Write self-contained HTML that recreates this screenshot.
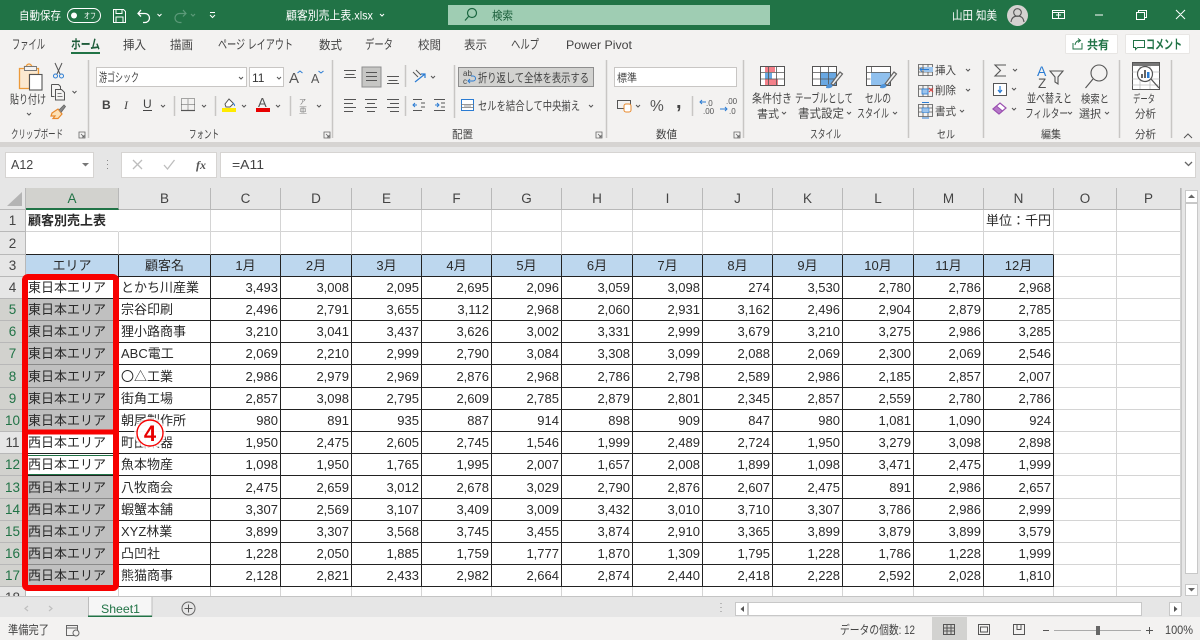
<!DOCTYPE html>
<html lang="ja"><head><meta charset="utf-8"><title>顧客別売上表</title>
<style>
html,body{margin:0;padding:0;width:1200px;height:640px;overflow:hidden;background:#e6e6e6}
body{position:relative;font-family:"Liberation Sans","Noto Sans CJK JP",sans-serif}
svg{position:absolute;left:0;top:0;font-family:"Liberation Sans","Noto Sans CJK JP",sans-serif}
svg text{fill:#444;font-size:12px}
.w text{fill:#fff}
.grid{position:absolute;left:0;top:188px;width:1181px;height:408px;overflow:hidden;background:#fff}
table{border-collapse:separate;border-spacing:0;table-layout:fixed;width:1181px;font-size:13px;color:#2a2a2a}
td,th{box-sizing:border-box;padding:0 2px 0 1px;border-right:1px solid #d4d4d4;border-bottom:1px solid #d4d4d4;text-align:right;line-height:17px;white-space:nowrap;overflow:hidden;font-weight:normal}
th{text-align:center;background:#e6e6e6;color:#444;font-size:13.5px;border-color:#b8b8b8;padding:0}
th.a{background:#d2d2ce;color:#217346;border-bottom:2px solid #217346}
th.s{background:#d2d2ce;color:#217346}
td.l{text-align:left;padding-left:2px}
td.c{text-align:center;padding:0}
tr.d td{border-color:#222}
tr.d td.g{border-color:#d4d4d4}
tr.b td{border-bottom-color:#222}
tr.b td.g{border-bottom-color:#d4d4d4}
tr.h td{background:#bdd7ee}
tr.h td.g{background:#fff}
td.x{background:#c0c0c0;border-bottom-color:#8a8a8a!important}
</style></head><body>
<div class="grid"><table>
<colgroup><col style="width:26px"><col style="width:93px"><col style="width:92px"><col style="width:70px"><col style="width:71px"><col style="width:70px"><col style="width:70px"><col style="width:70px"><col style="width:71px"><col style="width:70px"><col style="width:70px"><col style="width:70px"><col style="width:71px"><col style="width:70px"><col style="width:70px"><col style="width:63px"><col style="width:64px"></colgroup>
<tr style="height:22px"><th></th><th class="a">A</th><th>B</th><th>C</th><th>D</th><th>E</th><th>F</th><th>G</th><th>H</th><th>I</th><th>J</th><th>K</th><th>L</th><th>M</th><th>N</th><th>O</th><th>P</th></tr>
<tr style="height:22px"><th>1</th><td class="l" style="font-weight:bold;overflow:visible;border-right-color:transparent">顧客別売上表</td><td></td><td></td><td></td><td></td><td></td><td></td><td></td><td></td><td></td><td></td><td></td><td></td><td class="l" style="padding-left:2px">単位：千円</td><td></td><td></td></tr>
<tr class="b" style="height:23px"><th>2</th><td></td><td></td><td></td><td></td><td></td><td></td><td></td><td></td><td></td><td></td><td></td><td></td><td></td><td></td><td class="g"></td><td class="g"></td></tr>
<tr class="d h" style="height:22px"><th>3</th><td class="c">エリア</td><td class="c">顧客名</td><td class="c">1月</td><td class="c">2月</td><td class="c">3月</td><td class="c">4月</td><td class="c">5月</td><td class="c">6月</td><td class="c">7月</td><td class="c">8月</td><td class="c">9月</td><td class="c">10月</td><td class="c">11月</td><td class="c">12月</td><td class="g"></td><td class="g"></td></tr>
<tr class="d" style="height:22px"><th>4</th><td class="l">東日本エリア</td><td class="l">とかち川産業</td><td>3,493</td><td>3,008</td><td>2,095</td><td>2,695</td><td>2,096</td><td>3,059</td><td>3,098</td><td>274</td><td>3,530</td><td>2,780</td><td>2,786</td><td>2,968</td><td class="g"></td><td class="g"></td></tr>
<tr class="d" style="height:22px"><th class="s">5</th><td class="l x">東日本エリア</td><td class="l">宗谷印刷</td><td>2,496</td><td>2,791</td><td>3,655</td><td>3,112</td><td>2,968</td><td>2,060</td><td>2,931</td><td>3,162</td><td>2,496</td><td>2,904</td><td>2,879</td><td>2,785</td><td class="g"></td><td class="g"></td></tr>
<tr class="d" style="height:22px"><th class="s">6</th><td class="l x">東日本エリア</td><td class="l">狸小路商事</td><td>3,210</td><td>3,041</td><td>3,437</td><td>3,626</td><td>3,002</td><td>3,331</td><td>2,999</td><td>3,679</td><td>3,210</td><td>3,275</td><td>2,986</td><td>3,285</td><td class="g"></td><td class="g"></td></tr>
<tr class="d" style="height:22px"><th class="s">7</th><td class="l x">東日本エリア</td><td class="l">ABC電工</td><td>2,069</td><td>2,210</td><td>2,999</td><td>2,790</td><td>3,084</td><td>3,308</td><td>3,099</td><td>2,088</td><td>2,069</td><td>2,300</td><td>2,069</td><td>2,546</td><td class="g"></td><td class="g"></td></tr>
<tr class="d" style="height:23px"><th class="s">8</th><td class="l x">東日本エリア</td><td class="l">〇△工業</td><td>2,986</td><td>2,979</td><td>2,969</td><td>2,876</td><td>2,968</td><td>2,786</td><td>2,798</td><td>2,589</td><td>2,986</td><td>2,185</td><td>2,857</td><td>2,007</td><td class="g"></td><td class="g"></td></tr>
<tr class="d" style="height:22px"><th class="s">9</th><td class="l x">東日本エリア</td><td class="l">街角工場</td><td>2,857</td><td>3,098</td><td>2,795</td><td>2,609</td><td>2,785</td><td>2,879</td><td>2,801</td><td>2,345</td><td>2,857</td><td>2,559</td><td>2,780</td><td>2,786</td><td class="g"></td><td class="g"></td></tr>
<tr class="d" style="height:22px"><th class="s">10</th><td class="l x">東日本エリア</td><td class="l">朝尾製作所</td><td>980</td><td>891</td><td>935</td><td>887</td><td>914</td><td>898</td><td>909</td><td>847</td><td>980</td><td>1,081</td><td>1,090</td><td>924</td><td class="g"></td><td class="g"></td></tr>
<tr class="d" style="height:22px"><th>11</th><td class="l">西日本エリア</td><td class="l">町田楽器</td><td>1,950</td><td>2,475</td><td>2,605</td><td>2,745</td><td>1,546</td><td>1,999</td><td>2,489</td><td>2,724</td><td>1,950</td><td>3,279</td><td>3,098</td><td>2,898</td><td class="g"></td><td class="g"></td></tr>
<tr class="d" style="height:22px"><th class="s">12</th><td class="l">西日本エリア</td><td class="l">魚本物産</td><td>1,098</td><td>1,950</td><td>1,765</td><td>1,995</td><td>2,007</td><td>1,657</td><td>2,008</td><td>1,899</td><td>1,098</td><td>3,471</td><td>2,475</td><td>1,999</td><td class="g"></td><td class="g"></td></tr>
<tr class="d" style="height:23px"><th class="s">13</th><td class="l x">西日本エリア</td><td class="l">八牧商会</td><td>2,475</td><td>2,659</td><td>3,012</td><td>2,678</td><td>3,029</td><td>2,790</td><td>2,876</td><td>2,607</td><td>2,475</td><td>891</td><td>2,986</td><td>2,657</td><td class="g"></td><td class="g"></td></tr>
<tr class="d" style="height:22px"><th class="s">14</th><td class="l x">西日本エリア</td><td class="l">蝦蟹本舗</td><td>3,307</td><td>2,569</td><td>3,107</td><td>3,409</td><td>3,009</td><td>3,432</td><td>3,010</td><td>3,710</td><td>3,307</td><td>3,786</td><td>2,986</td><td>2,999</td><td class="g"></td><td class="g"></td></tr>
<tr class="d" style="height:22px"><th class="s">15</th><td class="l x">西日本エリア</td><td class="l">XYZ林業</td><td>3,899</td><td>3,307</td><td>3,568</td><td>3,745</td><td>3,455</td><td>3,874</td><td>2,910</td><td>3,365</td><td>3,899</td><td>3,879</td><td>3,899</td><td>3,579</td><td class="g"></td><td class="g"></td></tr>
<tr class="d" style="height:22px"><th class="s">16</th><td class="l x">西日本エリア</td><td class="l">凸凹社</td><td>1,228</td><td>2,050</td><td>1,885</td><td>1,759</td><td>1,777</td><td>1,870</td><td>1,309</td><td>1,795</td><td>1,228</td><td>1,786</td><td>1,228</td><td>1,999</td><td class="g"></td><td class="g"></td></tr>
<tr class="d" style="height:22px"><th class="s">17</th><td class="l x">西日本エリア</td><td class="l">熊猫商事</td><td>2,128</td><td>2,821</td><td>2,433</td><td>2,982</td><td>2,664</td><td>2,874</td><td>2,440</td><td>2,418</td><td>2,228</td><td>2,592</td><td>2,028</td><td>1,810</td><td class="g"></td><td class="g"></td></tr>
<tr style="height:22px"><th>18</th><td></td><td></td><td></td><td></td><td></td><td></td><td></td><td></td><td></td><td></td><td></td><td></td><td></td><td></td><td></td><td></td></tr>
</table></div>

<svg width="1200" height="640" viewBox="0 0 1200 640" xmlns="http://www.w3.org/2000/svg">
<!-- title bar -->
<rect width="1200" height="30" fill="#217346"/>
<rect y="30" width="1200" height="113" fill="#f3f2f1"/>
<rect y="142" width="1200" height="5" fill="#d6d4d2"/>
<g class="w">
<text x="19" y="19.500" textLength="42" lengthAdjust="spacingAndGlyphs" style="font-size:11.500px">自動保存</text>
<text x="84" y="18.500" style="font-size:8px" textLength="12" lengthAdjust="spacingAndGlyphs">オフ</text>
<text x="286" y="19.500" textLength="87" lengthAdjust="spacingAndGlyphs">顧客別売上表.xlsx</text>
<text x="952" y="19.500" textLength="45" lengthAdjust="spacingAndGlyphs">山田 知美</text>
</g>
<g fill="none" stroke="#fff" stroke-width="1">
<rect x="67.500" y="8.500" width="33" height="14" rx="7"/>
<path d="M113.500 9.500h10l2 2v11h-12zM116 9.500v4h6v-4M116 22.500v-5.500h7v5.500"/>
<path d="M141 10l-3 3.500 3 3M138.500 13.500h6.500a4.500 4.500 0 0 1 0 9h-2" stroke-width="1.300"/>
<path d="M157.500 14l2 2 2-2M380 14l2 2 2-2" stroke-width="1"/>
<path d="M210 12.500h5M210 15l2.500 2.500 2.500-2.500"/>
<path d="M1052.500 10.500h12v8h-12zM1052.500 12.500h12M1058.500 12.500v6M1056 15h5"/>
<path d="M1095 15h8M1136.500 12.500h8v7h-8zM1138.500 12.500v-2h8v7h-2M1176 10l9 9M1185 10l-9 9"/>
</g>
<circle cx="74" cy="15.500" r="3" fill="#fff"/>
<g fill="none" stroke="#5c9a79" stroke-width="1.200"><path d="M183 10l3 3.500-3 3M186 13.500h-6.500a4.500 4.500 0 0 0 0 9h2M191 14l2 2 2-2"/></g>
<rect x="448" y="5" width="322" height="20" fill="#9fcdb3"/>
<g fill="none" stroke="#1a6640" stroke-width="1.200"><circle cx="472" cy="13" r="4.500"/><path d="M468.500 16.500l-3.500 4"/></g>
<text x="492" y="19.500" textLength="21" lengthAdjust="spacingAndGlyphs" style="fill:#1a5e3a;font-size:11.500px">検索</text>
<circle cx="1017.500" cy="15.500" r="10.500" fill="#d4d2d0"/>
<g fill="none" stroke="#555" stroke-width="1.100"><circle cx="1017.500" cy="12.500" r="3.800"/><path d="M1011 22c.5-4 3-6 6.500-6s6 2 6.500 6"/></g>

<!-- tabs -->
<text x="12" y="49" textLength="33" lengthAdjust="spacingAndGlyphs" style="font-size:13px">ファイル</text>
<text x="71" y="49" textLength="29" lengthAdjust="spacingAndGlyphs" style="font-size:13px;font-weight:bold;fill:#1e5c3a">ホーム</text>
<text x="123" y="49" textLength="23" lengthAdjust="spacingAndGlyphs" style="font-size:12px">挿入</text>
<text x="170" y="49" textLength="23" lengthAdjust="spacingAndGlyphs" style="font-size:12px">描画</text>
<text x="218" y="49" textLength="75" lengthAdjust="spacingAndGlyphs" style="font-size:13px">ページ レイアウト</text>
<text x="319" y="49" textLength="23" lengthAdjust="spacingAndGlyphs" style="font-size:12px">数式</text>
<text x="365" y="49" textLength="28" lengthAdjust="spacingAndGlyphs" style="font-size:13px">データ</text>
<text x="418" y="49" textLength="23" lengthAdjust="spacingAndGlyphs" style="font-size:12px">校閲</text>
<text x="464" y="49" textLength="23" lengthAdjust="spacingAndGlyphs" style="font-size:12px">表示</text>
<text x="511" y="49" textLength="28" lengthAdjust="spacingAndGlyphs" style="font-size:13px">ヘルプ</text>
<text x="566" y="49" textLength="66" lengthAdjust="spacingAndGlyphs" style="font-size:12px">Power Pivot</text>
<rect x="71" y="52" width="29" height="2" fill="#217346"/>
<rect x="1065.500" y="34.500" width="52" height="19" rx="1" fill="#fff" stroke="#e8e6e4"/>
<rect x="1125.500" y="34.500" width="64" height="19" rx="1" fill="#fff" stroke="#e8e6e4"/>
<g fill="none" stroke="#217346" stroke-width="1"><path d="M1073 43v6h9v-6M1075 45c.5-3 2-4.500 5-4.500M1078 38.500l2.500 2-2.500 2"/><path d="M1133.500 40.500h11v7h-7l-2 2v-2h-2z"/></g>
<text x="1087" y="49" textLength="22" lengthAdjust="spacingAndGlyphs" style="font-size:12px;font-weight:bold;fill:#217346">共有</text>
<text x="1146" y="49" textLength="36" lengthAdjust="spacingAndGlyphs" style="font-size:13px;font-weight:bold;fill:#217346">コメント</text>

<!-- group separators -->
<g stroke="#c8c6c4" stroke-width="1.500">
<path d="M88.500 60v78M332.500 60v78M454.500 65v53M606.500 60v78M743.500 60v78M908.500 60v78M983.500 60v78M1119.500 60v78M1171.500 60v78M405.500 65v22M405.500 96v20M174.500 96v20M215.500 96v20M290.500 96v20M692.500 96v20"/>
</g>
<!-- clipboard -->
<path d="M19.500 68.500h5v-2h2a2.500 2.500 0 0 1 5 0h2v2h5v6h-9v14h-10z" fill="#fbe8cf" stroke="#ec9a3a" stroke-width="1.300"/>
<path d="M24.500 66.500h12v4h-12z" fill="#f3f2f1" stroke="#777" stroke-width=".9"/>
<rect x="29.500" y="74.500" width="12.500" height="15.500" fill="#fff" stroke="#555" stroke-width="1.100"/>
<text x="10" y="103.500" textLength="36" lengthAdjust="spacingAndGlyphs">貼り付け</text>
<g fill="none" stroke="#555" stroke-width="1">
<path d="M27 113l2 2 2-2M72.500 91l2 2 2-2"/>
<path d="M55 63l5 11M62 63l-5 11"/>
<path d="M51.500 84.500h7l2 2v3M51.500 84.500v12h3"/><path d="M55.500 89.500h6l3 3v7.500h-9z" fill="#f3f2f1"/><path d="M57.500 93.500h4M57.500 96.500h5" stroke-width=".8"/>
</g>
<circle cx="55.500" cy="76" r="2" fill="none" stroke="#2b7cd3"/><circle cx="61.500" cy="76" r="2" fill="none" stroke="#2b7cd3"/>
<path d="M52 113l6-4 4 5-4 4.500h-5l2-2.500h-4z" fill="#fce0b5" stroke="#e8892c" stroke-width="1.200"/>
<path d="M59 110l5-5 1.500 1.500-4.500 6" fill="#888" stroke="#666" stroke-width=".8"/>
<text x="11" y="138" textLength="52" lengthAdjust="spacingAndGlyphs" style="font-size:11.500px">クリップボード</text>
<g fill="none" stroke="#666" stroke-width=".8"><path d="M79 132h6v6h-6zM81 134l3 3M84 135v2h-2"/><path d="M324 132h6v6h-6zM326 134l3 3M329 135v2h-2"/><path d="M596 132h6v6h-6zM598 134l3 3M601 135v2h-2"/><path d="M734 132h6v6h-6zM736 134l3 3M739 135v2h-2"/></g>
<!-- font group -->
<rect x="96.500" y="67.500" width="150" height="19" fill="#fff" stroke="#c8c6c4"/>
<rect x="249.500" y="67.500" width="34" height="19" fill="#fff" stroke="#c8c6c4"/>
<text x="99" y="81.500" textLength="40" lengthAdjust="spacingAndGlyphs" style="font-size:12px">游ゴシック</text>
<text x="252" y="82" style="font-size:12px;fill:#333">11</text>
<text x="289" y="83" style="font-size:15px;fill:#555">A</text>
<text x="311" y="83" style="font-size:12.500px;fill:#555">A</text>
<g fill="none" stroke="#555" stroke-width="1"><path d="M239 77l2 2 2-2M277 77l2 2 2-2M161 105l2 2 2-2M202 105l2 2 2-2M242 105l2 2 2-2M276 105l2 2 2-2M317 105l2 2 2-2"/></g>
<path d="M297.500 73l2.500-2 2.500 2" fill="none" stroke="#2b7cd3"/><path d="M318.500 71l2.500 2 2.500-2" fill="none" stroke="#2b7cd3"/>
<text x="102" y="109" style="font-size:12px;font-weight:bold;fill:#444">B</text>
<text x="124" y="109" style="font-size:12px;font-style:italic;font-family:'Liberation Serif',serif;fill:#444">I</text>
<text x="143" y="108" style="font-size:12px;fill:#444">U</text>
<rect x="143" y="110" width="9" height="1" fill="#444"/>
<g fill="none" stroke="#555" stroke-width="1"><path d="M181.500 98.500h13v12h-13z" stroke-dasharray="1 1"/><path d="M181 110.500h14" stroke-width="1.200"/><path d="M188 98.500v12M181.500 104.500h13" stroke-dasharray="1 1"/></g>
<path d="M225 104l4-5 4.500 4.500-3.500 3.500h-4z" fill="#fff" stroke="#555"/><path d="M233 103c1 1 2 2 1.500 3" stroke="#2b7cd3" fill="none"/>
<rect x="222" y="108" width="14" height="4" fill="#ffeb00"/>
<text x="258" y="107" style="font-size:13px;fill:#555">A</text>
<rect x="256" y="108" width="14" height="4" fill="#e80000"/>
<text x="299" y="104" style="font-size:7px;fill:#777">ア</text><text x="299" y="113" style="font-size:8px;fill:#888">亜</text>
<text x="189" y="138" textLength="30" lengthAdjust="spacingAndGlyphs" style="font-size:11.500px">フォント</text>
<!-- alignment -->
<rect x="362" y="67" width="19" height="20" fill="#c6c6c4" stroke="#8e8e8e"/>
<g fill="none" stroke="#555" stroke-width="1">
<path d="M344 70.500h12M345.500 74.500h9M344 77.500h12"/>
<path d="M366 72.500h11M366 76.500h11M366 80.500h11"/>
<path d="M387 76.500h12M388.500 80.500h9M387 83.500h12"/>
<path d="M344 99.500h12M344 103.500h9M344 107.500h12M344 111.500h9"/>
<path d="M365 99.500h12M367 103.500h8M365 107.500h12M367 111.500h8"/>
<path d="M387 99.500h12M390 103.500h9M387 107.500h12M390 111.500h9"/>
<path d="M431 76l2 2 2-2M589 105l2 2 2-2M729 77l2 2 2-2M636 105l2 2 2-2"/>
<path d="M413 72l5 5M416 70l5 5"/>
<path d="M422 99.500h-9M425 103h-4M425 107h-4M422 110.500h-9M434 99.500h11M441 103h4M441 107h4M434 110.500h11"/>
</g>
<path d="M415 82l10-8M421 74h4v4" fill="none" stroke="#2b7cd3" stroke-width="1.200"/>
<path d="M417 105h-4M415 103l-2 2 2 2M435 105h4M437 103l2 2-2 2" fill="none" stroke="#2b7cd3"/>
<rect x="458.500" y="67.500" width="135" height="19" fill="#d2d2d0" stroke="#8e8e8e"/>
<text x="463" y="76" style="font-size:8px;fill:#444">ab</text><text x="463" y="84" style="font-size:8px;fill:#444">c</text>
<path d="M468 81h5a2 2 0 0 0 0-5h-2M470 79l-2 2 2 2" fill="none" stroke="#2b7cd3"/>
<text x="478" y="82" textLength="111" lengthAdjust="spacingAndGlyphs">折り返して全体を表示する</text>
<rect x="461.500" y="99.500" width="12" height="11" fill="#fff" stroke="#2b7cd3"/>
<path d="M461 104.500h13M461 107.500h13M464 106h7" stroke="#777" fill="none" stroke-width=".8"/>
<text x="478" y="110" textLength="102" lengthAdjust="spacingAndGlyphs">セルを結合して中央揃え</text>
<text x="452" y="138" textLength="21" lengthAdjust="spacingAndGlyphs" style="font-size:11px">配置</text>
<!-- number -->
<rect x="614.500" y="67.500" width="122" height="19" fill="#fff" stroke="#c8c6c4"/>
<text x="617" y="81.500" textLength="20" lengthAdjust="spacingAndGlyphs" style="font-size:11px">標準</text>
<rect x="617.500" y="100.500" width="13" height="8" fill="none" stroke="#555"/>
<rect x="624" y="104" width="7" height="8" rx="2" fill="#fff" stroke="#e8892c"/>
<text x="650" y="111" style="font-size:15.500px;fill:#555">%</text>
<text x="676" y="108" style="font-size:20px;font-weight:bold;fill:#444">,</text>
<text x="706" y="106" style="font-size:8px;fill:#555">.0</text><text x="703" y="114" style="font-size:8px;fill:#555">.00</text>
<text x="726" y="104" style="font-size:8px;fill:#555">.00</text><text x="729" y="114" style="font-size:8px;fill:#555">.0</text>
<path d="M706 102h-6M702 100l-2 2 2 2M720 109h7M725 107l2 2-2 2" fill="none" stroke="#2b7cd3"/>
<text x="656" y="138" textLength="21" lengthAdjust="spacingAndGlyphs" style="font-size:11px">数値</text>
<!-- styles -->
<rect x="760.500" y="66.500" width="24" height="19" fill="#fff" stroke="#555"/>
<rect x="765" y="67" width="10" height="5" fill="#f4808a"/><rect x="765" y="73" width="7" height="6" fill="#6aa8e2"/><rect x="765" y="79" width="13" height="6" fill="#f4808a"/>
<path d="M760.500 72.500h24M760.500 79h24M768.500 66.500v19M776.500 66.500v19" stroke="#555" fill="none" stroke-width=".8"/>
<rect x="812.500" y="66.500" width="24" height="19" fill="#fff" stroke="#555"/>
<rect x="820" y="72" width="16" height="13" fill="#6aa8e2"/>
<path d="M812.500 72.500h24M812.500 79h24M820.500 66.500v19M828.500 66.500v19" stroke="#555" fill="none" stroke-width=".8"/>
<rect x="866.500" y="66.500" width="24" height="19" fill="#fff" stroke="#555"/>
<rect x="871" y="72" width="19" height="13" fill="#8fc0ee"/>
<path d="M866.500 72.500h24M866.500 79h4M871.500 66.500v6" stroke="#555" fill="none" stroke-width=".8"/>
<g fill="none" stroke="#666" stroke-width="1.200"><path d="M831 84l9-12 2.500 2-9 11z" fill="#f3f2f1"/><path d="M885 84l9-12 2.500 2-9 11z" fill="#f3f2f1"/></g>
<path d="M826 88c0-3 2-4 4-4s3 2 2 3-3 1.500-6 1z" fill="#4f93d8"/><path d="M880 88c0-3 2-4 4-4s3 2 2 3-3 1.500-6 1z" fill="#4f93d8"/>
<text x="752" y="102.500" textLength="40" lengthAdjust="spacingAndGlyphs">条件付き</text>
<text x="757" y="117.500" textLength="22" lengthAdjust="spacingAndGlyphs" style="font-size:11px">書式</text>
<text x="795" y="102.500" textLength="58" lengthAdjust="spacingAndGlyphs">テーブルとして</text>
<text x="798" y="117.500" textLength="46" lengthAdjust="spacingAndGlyphs">書式設定</text>
<text x="865" y="102.500" textLength="26" lengthAdjust="spacingAndGlyphs">セルの</text>
<text x="857" y="117.500" textLength="32" lengthAdjust="spacingAndGlyphs">スタイル</text>
<text x="810" y="138" textLength="31" lengthAdjust="spacingAndGlyphs" style="font-size:11.500px">スタイル</text>
<g fill="none" stroke="#555" stroke-width="1"><path d="M782 112l2 2 2-2M847 112l2 2 2-2M893 112l2 2 2-2M966 69l2 2 2-2M966 89l2 2 2-2M960 110l2 2 2-2M1013 69l2 2 2-2M1012 88l2 2 2-2M1012 108l2 2 2-2M1068 112l2 2 2-2M1105 112l2 2 2-2"/></g>
<!-- cells -->
<g fill="none" stroke="#555" stroke-width="1"><path d="M918.500 64.500h14v11h-14zM918.500 68h14M918.500 72h14M923 64.500v11M928 64.500v11" stroke-width=".8"/><path d="M918.500 85.500h14v11h-14zM923 85.500v11M928 85.500v11M918.500 89h14" stroke-width=".8"/><path d="M918.500 104.500h14v12h-14zM923 104.500v12M928 104.500v12M918.500 108h14M918.500 112h14" stroke-width=".8"/></g>
<rect x="924" y="67" width="9" height="5" fill="#9cc4ec"/><path d="M929 69.500h-9M922 67.500l-2 2 2 2" fill="none" stroke="#2b7cd3"/>
<rect x="922" y="89" width="6" height="5" fill="#9cc4ec" stroke="#2b7cd3" stroke-width=".8"/><path d="M929 88l4 4M933 88l-4 4" stroke="#e04040" fill="none"/>
<rect x="922" y="108" width="7" height="4.500" fill="#9cc4ec" stroke="#2b7cd3" stroke-width=".6"/>
<path d="M922 102.500h7M922 118h7" stroke="#2b7cd3"/>
<text x="935" y="74" textLength="21" lengthAdjust="spacingAndGlyphs" style="font-size:11px">挿入</text>
<text x="935" y="94" textLength="21" lengthAdjust="spacingAndGlyphs" style="font-size:11px">削除</text>
<text x="935" y="115" textLength="21" lengthAdjust="spacingAndGlyphs" style="font-size:11px">書式</text>
<text x="937" y="138" textLength="18" lengthAdjust="spacingAndGlyphs" style="font-size:11px">セル</text>
<!-- editing -->
<path d="M1006 65h-11l5.500 5.500-5.500 5.500h11" fill="none" stroke="#555" stroke-width="1.100"/>
<rect x="993.500" y="83.500" width="13" height="12" fill="#fff" stroke="#555"/>
<path d="M1000 86v6M998 90l2 2.500 2-2.500" fill="none" stroke="#2b7cd3" stroke-width="1.200"/>
<path d="M993 109l7-6 6 5-7 6z" fill="#fff" stroke="#9a4fb0" stroke-width="1.200"/><path d="M993 109l3.500-3 6 5-3.500 3z" fill="#b578c8" stroke="#9a4fb0"/>
<text x="1037" y="76" style="font-size:14px;fill:#2b7cd3">A</text>
<text x="1038" y="88" style="font-size:13.500px;fill:#555">Z</text>
<path d="M1050 71h13l-5 6v7l-3-2v-5z" fill="none" stroke="#555" stroke-width="1.100"/>
<circle cx="1099" cy="73" r="8" fill="none" stroke="#555" stroke-width="1.100"/><path d="M1093 79l-7.500 9" fill="none" stroke="#555" stroke-width="1.100"/>
<text x="1027" y="102.500" textLength="45" lengthAdjust="spacingAndGlyphs">並べ替えと</text>
<text x="1025" y="117.500" textLength="43" lengthAdjust="spacingAndGlyphs">フィルター</text>
<text x="1081" y="102.500" textLength="28" lengthAdjust="spacingAndGlyphs" style="font-size:11px">検索と</text>
<text x="1079" y="117.500" textLength="22" lengthAdjust="spacingAndGlyphs" style="font-size:11px">選択</text>
<text x="1041" y="138" textLength="20" lengthAdjust="spacingAndGlyphs" style="font-size:11px">編集</text>
<!-- analysis -->
<rect x="1132.500" y="62.500" width="27" height="27" fill="#fff" stroke="#555"/>
<rect x="1133" y="63" width="26" height="3" fill="#777"/>
<path d="M1132.500 72h27M1132.500 79h27M1132.500 85h27M1140 66v23M1150 66v23" stroke="#c0c0c0" fill="none" stroke-width=".8"/>
<circle cx="1145" cy="74" r="7.500" fill="#fff" stroke="#555" stroke-width="1.200"/>
<path d="M1151 79l8 9" stroke="#555" stroke-width="1.300"/>
<rect x="1141" y="74" width="2" height="4" fill="#666"/><rect x="1144" y="70" width="2" height="8" fill="#666"/><rect x="1147" y="72" width="2.500" height="6" fill="#2b7cd3"/>
<text x="1133" y="102.500" textLength="22" lengthAdjust="spacingAndGlyphs" style="font-size:11px">データ</text>
<text x="1135" y="117.500" textLength="21" lengthAdjust="spacingAndGlyphs" style="font-size:11px">分析</text>
<text x="1135" y="138" textLength="21" lengthAdjust="spacingAndGlyphs" style="font-size:11px">分析</text>
<path d="M1184 138l4-4 4 4" fill="none" stroke="#555" stroke-width="1"/>

<!-- formula bar -->
<rect x="0" y="147" width="1200" height="41" fill="#e6e6e6"/>
<rect x="5.500" y="152.500" width="88" height="25" fill="#fff" stroke="#d6d4d2"/>
<text x="11" y="169" style="font-size:12.500px;fill:#444">A12</text>
<path d="M82 163h7l-3.500 3.500z" fill="#777"/>
<path d="M107.500 160v1M107.500 164v1M107.500 168v1" stroke="#888"/>
<rect x="121.500" y="152.500" width="95" height="25" fill="#fff" stroke="#d6d4d2"/>
<rect x="220.500" y="152.500" width="975" height="25" fill="#fff" stroke="#d6d4d2"/>
<path d="M133 160l9 9M142 160l-9 9" stroke="#bdbdbd" stroke-width="1.300" fill="none"/>
<path d="M164 165l3.500 4 7-9" stroke="#bdbdbd" stroke-width="1.300" fill="none"/>
<text x="196" y="169" style="font-size:12px;font-style:italic;font-weight:bold;font-family:'Liberation Serif',serif;fill:#555">fx</text>
<text x="232" y="169" style="font-size:12.500px;fill:#444" textLength="32" lengthAdjust="spacingAndGlyphs">=A11</text>
<path d="M1185 162l3.500 3.500 3.500-3.500" fill="none" stroke="#666" stroke-width="1.300"/>
<!-- header corner -->
<path d="M22 192v14h-15z" fill="#b4b4b4"/>

<!-- active cell -->
<rect x="26.500" y="455.500" width="91" height="19" fill="none" stroke="#217346" stroke-width="1"/>
<!-- red box -->
<rect x="25" y="277" width="91" height="311" rx="3" fill="none" stroke="#f70000" stroke-width="6"/>
<rect x="25" y="429.500" width="91" height="5" fill="#f70000"/>
<!-- callout -->
<circle cx="150" cy="433" r="16" fill="#fff" opacity=".75"/>
<circle cx="150" cy="433" r="13" fill="#fff" fill-opacity=".88" stroke="#f70000" stroke-width="1.400"/>
<text x="150" y="441" text-anchor="middle" style="font-size:22px;font-weight:bold;fill:#e80000">4</text>

<!-- right scrollbar -->
<rect x="1181" y="188" width="19" height="408" fill="#e6e6e6"/>
<rect x="1181" y="188" width="1" height="408" fill="#c8c8c8"/>
<rect x="1185.500" y="190.500" width="12" height="12" fill="#fff" stroke="#c8c8c8"/>
<path d="M1188 198h7l-3.500-3.500z" fill="#666"/>
<rect x="1185.500" y="203.500" width="12" height="370" fill="#fff" stroke="#c8c8c8"/>
<rect x="1185.500" y="584.500" width="12" height="11" fill="#fff" stroke="#c8c8c8"/>
<path d="M1188 588h7l-3.500 3.500z" fill="#666"/>

<!-- sheet tab bar -->
<rect y="596" width="1200" height="21" fill="#e6e6e6"/>
<rect y="596" width="1181" height="1" fill="#c4c4c4"/>
<path d="M88.500 597v20h63.500v-20" fill="#f6f6f6" stroke="#bdbdbd"/>
<rect x="88" y="615.500" width="64" height="2" fill="#217346"/>
<text x="101" y="613" textLength="39" lengthAdjust="spacingAndGlyphs" style="font-size:12px;fill:#217346">Sheet1</text>
<path d="M28 606l-3 2.500 3 2.500M49 606l3 2.500-3 2.500" fill="none" stroke="#c0c0c0" stroke-width="1.200"/>
<circle cx="188.500" cy="608.500" r="6.500" fill="none" stroke="#666"/>
<path d="M188.500 604.500v8M184.500 608.500h8" stroke="#555"/>
<path d="M721 603v1M721 607v1M721 611v1" stroke="#888"/>
<rect x="735.500" y="602.500" width="12" height="13" fill="#fff" stroke="#c8c8c8"/>
<path d="M744 606v6l-3.500-3z" fill="#555"/>
<rect x="748.500" y="602.500" width="393" height="13" fill="#fff" stroke="#c8c8c8"/>
<rect x="1169.500" y="602.500" width="12" height="13" fill="#fff" stroke="#c8c8c8"/>
<path d="M1174 606v6l3.500-3z" fill="#555"/>

<!-- status bar -->
<rect y="617" width="1200" height="23" fill="#f3f2f1"/>
<text x="8" y="634" textLength="41" lengthAdjust="spacingAndGlyphs">準備完了</text>
<rect x="66.500" y="625.500" width="11" height="10" fill="none" stroke="#666"/>
<path d="M66.500 628h11" stroke="#666"/>
<circle cx="76" cy="633" r="3" fill="#f3f2f1" stroke="#666"/>
<text x="840" y="634" textLength="75" lengthAdjust="spacingAndGlyphs">データの個数: 12</text>
<rect x="932" y="617" width="35" height="23" fill="#d2d2d0"/>
<g fill="none" stroke="#555" stroke-width="1">
<path d="M943.500 624.500h11v10h-11zM943.500 628h11M943.500 631h11M947 624.500v10M951 624.500v10"/>
<path d="M978.500 624.500h11v10h-11zM980.500 627h7v5h-7z"/>
<path d="M1013.500 624.500h11v10h-11zM1017 624.500v5h4v-5"/>
</g>
<path d="M1054 630.500h87" stroke="#aaa" stroke-width="1"/>
<rect x="1096" y="626" width="4" height="9" fill="#666"/>
<path d="M1043 630.500h6M1146 630.500h7M1149.500 627v7" stroke="#555" fill="none"/>
<text x="1165" y="634" textLength="28" lengthAdjust="spacingAndGlyphs">100%</text>
</svg>
</body></html>
